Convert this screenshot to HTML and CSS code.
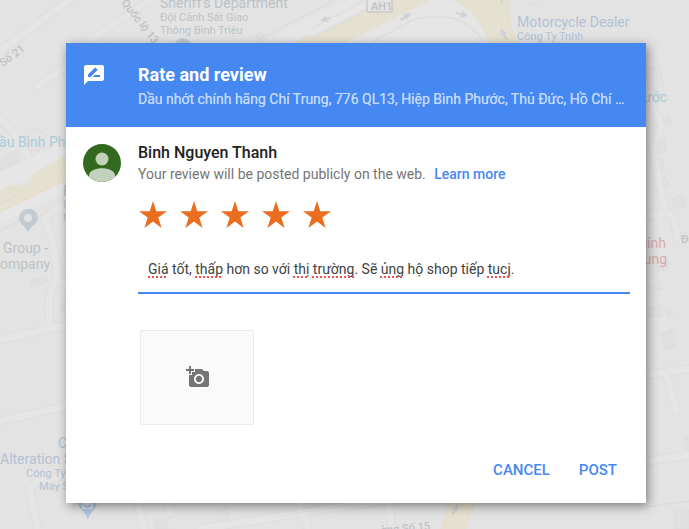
FILE: index.html
```html
<!DOCTYPE html>
<html lang="en">
<head>
    <meta charset="UTF-8">
    <meta name="viewport" content="width=device-width, initial-scale=1.0">
    <title>Rate and review</title>
    <link rel="stylesheet" href="styles.css">
</head>
<body>

<!-- Map behind the dialog -->
<svg class="map" viewBox="0 0 689 529" preserveAspectRatio="xMidYMid slice" aria-hidden="true">
    <g class="buildings">
        <path d="M646 68l14-2 4 20-16 4zM662 119l7-3 2 8-7 3zM653 142l11-3 3 12-12 3zM655 161l7-2 3 11-7 2zM660 178l5-2 4 9-6 2zM672 199l6-4 6 2 1 9-12 2zM653 286l6-5 3 8-8 1zM649 308l11-3 2 11-13 2zM665 310l5-3 3 8-4 3zM660 335l11-6 5 16-11 4zM684 436l10 3v14l-9-4zM674 510h15v19h-15zM657 263l11-2v8l-10 2z"/>
        <path d="M0 161l17-10 3 11-20 9zM29 281l18-5v6l-16 5zM60 304l8-1v8h-7zM155 520l11-2 2 11h-13zM216 510l12-3v12l-12 3zM255 36l6-4 6 10-6 3z"/>
    </g>
    <g class="road-edge">
        <path d="M-5 55L80-8M38 86L100 42M0 119Q16 130 31 162M0 340L52 328 80 325M0 421L80 403M50 325Q46 290 57 280 58 265 52 240L45 218 66 203M57 280L80 290M38 529L30 490Q31 483 45 480L70 474M137 500L144 529M168 500L170 513M298 500L308 529M200 529L300 513 689 455M646 375L689 369M666 373L676 410M640 218L668 212Q675 214 677 238M665 212L653 150 661 126 650 100M388 500l4 29M90 40L150 0"/>
    </g>
    <g class="road">
        <path d="M-5 55L80-8M38 86L100 42M0 119Q16 130 31 162M0 340L52 328 80 325M0 421L80 403M50 325Q46 290 57 280 58 265 52 240L45 218 66 203M57 280L80 290M38 529L30 490Q31 483 45 480L70 474M137 500L144 529M168 500L170 513M298 500L308 529M200 529L300 513 689 455M646 375L689 369M666 373L676 410M640 218L668 212Q675 214 677 238M665 212L653 150 661 126 650 100M388 500l4 29M90 40L150 0"/>
    </g>
    <path class="road-wide" d="M-5 216L70 180M-5 184L70 148M265 50L375-6"/>
    <path class="highway" d="M0 191Q12 181 21 187 34 181 33 173L70 153V179L0 212zM295 43L307 35 314 37 375 5 385 0H430L345 43zM449 0H509Q507 27 518 45H489Q476 6 449 0zM450 502H475L465 529H441z"/>
    <path class="block" d="M345 43L430 0H449Q476 6 489 45z"/>
    <path class="highway-edge" d="M0 212L70 178M509 0Q508 28 517 44M450 502L441 529M475 502L465 529"/>
    <path class="thin" d="M0 204L18 194M0 231L22 220M371 43Q400 26 413 20 430 15 452 18 470 22 485 43M646 507L689 501M311 29L365 0M314 37L375 5M258 40L335 0"/>
    <path class="area" d="M27 137L36 128 46 135 39 151 28 149zM527 0l5 6 8-5M483 5l3 6 1-6"/>
    <g class="arrows">
        <path d="M400 19l5-3-2-2 8-1-4 7-1-2-5 3zM456 12l6 1v-3l6 6-8 2 1-3-5-1zM506 40l-4-6-2 2 1-8 6 5-2 1 3 5zM320 21l6-6v3l6-2-5 4 2 2zM458 503l-5 5-1 7 6-5v-2zM502 5l1-5h-2"/>
    </g>
    <path class="pin" d="M28 209a9 9 0 0 0-9 9c0 7 8 8 9 15 1-7 10-8 10-15a9 9 0 0 0-10-9zm0 5a4 4 0 1 1 0 8 4 4 0 0 1 0-8z"/>
    <circle class="pin" cx="183" cy="47" r="9"/>
    <path class="pin pin-shop" d="M78 500h19c1 9-7 11-9 20-2-9-11-11-10-20z"/>
    <path class="pin-bag" d="M82 502h11v7H82z"/>
    <path class="pin-handle" d="M84 505q3 4 7 0"/>
    <rect class="shield" x="367" y="-4" width="25" height="16"/>
    <g class="street">
        <text x="371" y="10">AH1</text>
        <text x="3" y="67" transform="rotate(-37 3 67)">Số 21</text>
        <text x="121" y="3" transform="rotate(52 121 3)">Quốc lộ 13</text>
        <text x="381" y="534" transform="rotate(-5 381 534)">ờng Số 15</text>
        <text x="681" y="243">Đường</text>
    </g>
    <g class="place">
        <text x="160" y="8">Sheriff's Department</text>
        <text x="3" y="253">Group -</text>
        <text x="0" y="269">ompany</text>
        <text class="minor" x="160" y="21">Đội Cảnh Sát Giao</text>
        <text class="minor" x="160" y="34">Thông Bình Triệu</text>
    </g>
    <g class="place shop">
        <text x="517" y="27">Motorcycle Dealer</text>
        <text x="58" y="448">C</text>
        <text x="0" y="464">Alteration S</text>
        <text x="63" y="196">F</text>
        <text class="minor" x="517" y="40">Công Ty Tnhh</text>
        <text class="minor" x="63" y="208">C</text>
        <text class="minor" x="63" y="221">I</text>
        <text class="minor" x="26" y="477">Công Ty</text>
        <text class="minor" x="39" y="490">May S</text>
    </g>
    <g class="place bridge">
        <text x="-10" y="147">Cầu Bình Phư</text>
        <text x="667" y="102" text-anchor="end">ước</text>
    </g>
    <g class="place health">
        <text x="666" y="248" text-anchor="end">hính</text>
        <text x="667" y="264" text-anchor="end">ung</text>
    </g>
</svg>

<form class="dialog">
    <header class="dialog-header">
        <svg class="header-icon" viewBox="0 0 24 24" aria-hidden="true">
            <path d="M20 2H4c-1.100 0-2 .9-2 2v18l4-4h14c1.100 0 2-.9 2-2V4c0-1.100-.9-2-2-2zM6 14v-2.470l6.880-6.880c.2-.2.510-.2.710 0l1.770 1.770c.2.2.2.510 0 .710L8.470 14H6zm12 0h-7.500l2-2H18v2z"/>
        </svg>
        <div class="header-text">
            <h1>Rate and review</h1>
            <p>Dầu nhớt chính hãng Chí Trung, 776 QL13, Hiệp Bình Phước, Thủ Đức, Hồ Chí Minh, Vietnam</p>
        </div>
    </header>

    <div class="dialog-body">
        <svg class="avatar" viewBox="0 0 40 40" aria-hidden="true">
            <clipPath id="avatar-clip"><circle cx="20" cy="20" r="19"/></clipPath>
            <g clip-path="url(#avatar-clip)">
                <rect class="avatar-bg" width="40" height="40"/>
                <circle class="avatar-fg" cx="20" cy="16" r="6.500"/>
                <path class="avatar-fg" d="M7 40V32C8 23 32 23 33 32V40z"/>
            </g>
        </svg>

        <div class="review">
            <h2>Binh Nguyen Thanh</h2>
            <p class="notice">Your review will be posted publicly on the web. <a href="#">Learn more</a></p>

            <div class="stars" role="radiogroup" aria-label="Rating">
                <label class="star"><input type="radio" name="rating" value="1" aria-label="1 star"><svg viewBox="0 0 28 28"><path d="M14 0l3.300 10.300H28l-8.700 6.300L22.600 27 14 20.600 5.400 27l3.300-10.400L0 10.300h10.700z"/></svg></label>
                <label class="star"><input type="radio" name="rating" value="2" aria-label="2 stars"><svg viewBox="0 0 28 28"><path d="M14 0l3.300 10.300H28l-8.700 6.300L22.600 27 14 20.600 5.400 27l3.300-10.400L0 10.300h10.700z"/></svg></label>
                <label class="star"><input type="radio" name="rating" value="3" aria-label="3 stars"><svg viewBox="0 0 28 28"><path d="M14 0l3.300 10.300H28l-8.700 6.300L22.600 27 14 20.600 5.400 27l3.300-10.400L0 10.300h10.700z"/></svg></label>
                <label class="star"><input type="radio" name="rating" value="4" aria-label="4 stars"><svg viewBox="0 0 28 28"><path d="M14 0l3.300 10.300H28l-8.700 6.300L22.600 27 14 20.600 5.400 27l3.300-10.400L0 10.300h10.700z"/></svg></label>
                <label class="star"><input type="radio" name="rating" value="5" aria-label="5 stars" checked><svg viewBox="0 0 28 28"><path d="M14 0l3.300 10.300H28l-8.700 6.300L22.600 27 14 20.600 5.400 27l3.300-10.400L0 10.300h10.700z"/></svg></label>
            </div>

            <div class="comment">
                <textarea name="comment" rows="1" spellcheck="false" aria-label="Your review">Giá tốt, thấp hơn so với thị trường. Sẽ ủng hộ shop tiếp tucj.</textarea>
                <!-- Spelling marks, laid over the textarea -->
                <div class="spelling" aria-hidden="true"><u>Giá</u> tốt, <u>thấp</u> hơn so với <u>thị</u> <u>trường</u>. Sẽ <u>ủng</u> hộ shop tiếp <u>tucj</u>.</div>
            </div>

            <button type="button" class="add-photo" aria-label="Add photos">
                <svg viewBox="0 0 24 24" aria-hidden="true">
                    <path d="M3 4V1h2v3h3v2H5v3H3V6H0V4h3zm3 6V7h3V4h7l1.830 2H21c1.100 0 2 .9 2 2v12c0 1.100-.9 2-2 2H5c-1.100 0-2-.9-2-2V10h3zm7 9c2.760 0 5-2.240 5-5s-2.240-5-5-5-5 2.240-5 5 2.240 5 5 5zm-3.200-5c0 1.770 1.430 3.200 3.200 3.200s3.200-1.430 3.200-3.200-1.430-3.200-3.200-3.200-3.200 1.430-3.200 3.200z"/>
                </svg>
            </button>
        </div>
    </div>

    <footer class="actions">
        <button type="button" class="btn">CANCEL</button>
        <button type="submit" class="btn">POST</button>
    </footer>
</form>

</body>
</html>
```
FILE: styles.css
```css
* {
    box-sizing: border-box;
}
body {
    margin: 0;
    padding: 43px 43px 26px 66px;
    min-height: 100vh;
    background-color: #e3e3e3;
    font-family: Roboto, Arial, sans-serif;
    font-size: 14px;
    overflow: hidden;
}
h1, h2, p {
    margin: 0;
}

/* Map */
.map {
    position: absolute;
    top: 0;
    left: 0;
    width: 100%;
    height: 100%;
}
.buildings {
    fill: #e0e0e0;
    stroke: #dddddd;
}
.road-edge, .road, .road-wide, .highway-edge, .thin, .area {
    fill: none;
    stroke-linecap: round;
}
.road-edge {
    stroke: #dedede;
    stroke-width: 9;
}
.road {
    stroke: #e5e5e5;
    stroke-width: 7;
}
.road-wide {
    stroke: #e6e6e6;
    stroke-width: 16;
}
.highway {
    fill: #e5e1d0;
}
.block {
    fill: #e5e5e5;
}
.highway-edge {
    stroke: #e8dcc5;
}
.thin {
    stroke: #dadada;
}
.area {
    stroke: #e6d9d0;
}
.arrows {
    fill: #d0d1d6;
}
.pin {
    fill: #c3cbd0;
}
.pin-shop {
    fill: #b2c7e2;
}
.pin-bag {
    fill: #dde3eb;
}
.pin-handle {
    fill: none;
    stroke: #b2c7e2;
    stroke-width: 2;
}
.shield {
    fill: #e4e4e4;
    stroke: #bdbdbd;
}
.street {
    fill: #bfc1c3;
    font-size: 11px;
    font-weight: 500;
}
.place {
    fill: #bcc2c6;
    font-size: 14px;
}
.minor {
    font-size: 11px;
}
.shop {
    fill: #b3c1d3;
}
.bridge {
    fill: #a9cbd9;
}
.health {
    fill: #d9abab;
}

/* Dialog */
.dialog {
    position: relative;
    background-color: #fff;
    box-shadow: 2px 3px 10px rgba(0, 0, 0, 0.45);
}
.dialog-header {
    display: flex;
    gap: 32px;
    padding: 20px 16px 16px;
    background-color: #4588f1;
    color: #fff;
}
.header-icon {
    flex: none;
    width: 24px;
    height: 24px;
    fill: #fff;
}
.header-text {
    min-width: 0;
}
.header-text h1 {
    font-size: 18px;
    line-height: 24px;
    font-weight: 700;
}
.header-text p {
    line-height: 24px;
    color: #c1d8fb;
    text-shadow: 0 0 currentColor;
    white-space: nowrap;
    overflow: hidden;
    text-overflow: ellipsis;
}
.dialog-body {
    display: flex;
    gap: 16px;
    padding: 16px;
}
.avatar {
    flex: none;
    width: 40px;
    height: 40px;
}
.avatar-bg {
    fill: #33691e;
}
.avatar-fg {
    fill: #c2d1bb;
}
.review {
    flex: 1;
    min-width: 0;
}
.review h2 {
    font-size: 16px;
    line-height: 20px;
    font-weight: 500;
    color: #212121;
}
.notice {
    line-height: 22px;
    color: #757575;
}
.notice a {
    margin-left: 5px;
    color: #4588f1;
    font-weight: 500;
    text-decoration: none;
}
.stars {
    display: flex;
    gap: 13px;
    margin-top: 16px;
    padding-left: 1px;
}
.star {
    display: grid;
    cursor: pointer;
}
.star input, .star svg {
    grid-area: 1 / 1;
    width: 28px;
    height: 28px;
    margin: 0;
}
.star input {
    appearance: none;
}
.star svg {
    fill: #ea6e20;
}
.star:has(input:checked) ~ .star svg {
    fill: #dadada;
}
.comment {
    position: relative;
    margin-top: 20px;
    border-bottom: 2px solid #4588f1;
}
.comment textarea, .spelling {
    display: block;
    width: 100%;
    height: 43px;
    padding: 9px 10px;
    border: 0;
    font: inherit;
    line-height: 22px;
    color: #424242;
}
.comment textarea {
    background: none;
    outline: none;
    resize: none;
    overflow: hidden;
}
.spelling {
    position: absolute;
    top: 0;
    left: 0;
    color: transparent;
    pointer-events: none;
}
.spelling u {
    text-decoration: underline dotted #f05050 2px;
    text-decoration-skip-ink: none;
    text-underline-offset: 2px;
}
.add-photo {
    display: flex;
    align-items: center;
    justify-content: center;
    width: 114px;
    height: 95px;
    margin: 36px 2px 0;
    padding: 0 0 2px 2px;
    border: 1px solid #ebebeb;
    background-color: #fafafa;
    cursor: pointer;
}
.add-photo svg {
    width: 24px;
    height: 24px;
    fill: #757575;
}
.actions {
    display: flex;
    justify-content: flex-end;
    gap: 13px;
    padding: 11px 21px 15px;
}
.btn {
    padding: 8px;
    border: 0;
    background: none;
    font-family: inherit;
    font-size: 15px;
    line-height: 20px;
    font-weight: 500;
    color: #4588f1;
    cursor: pointer;
}
.btn:hover {
    background-color: #f1f6fe;
}
```
